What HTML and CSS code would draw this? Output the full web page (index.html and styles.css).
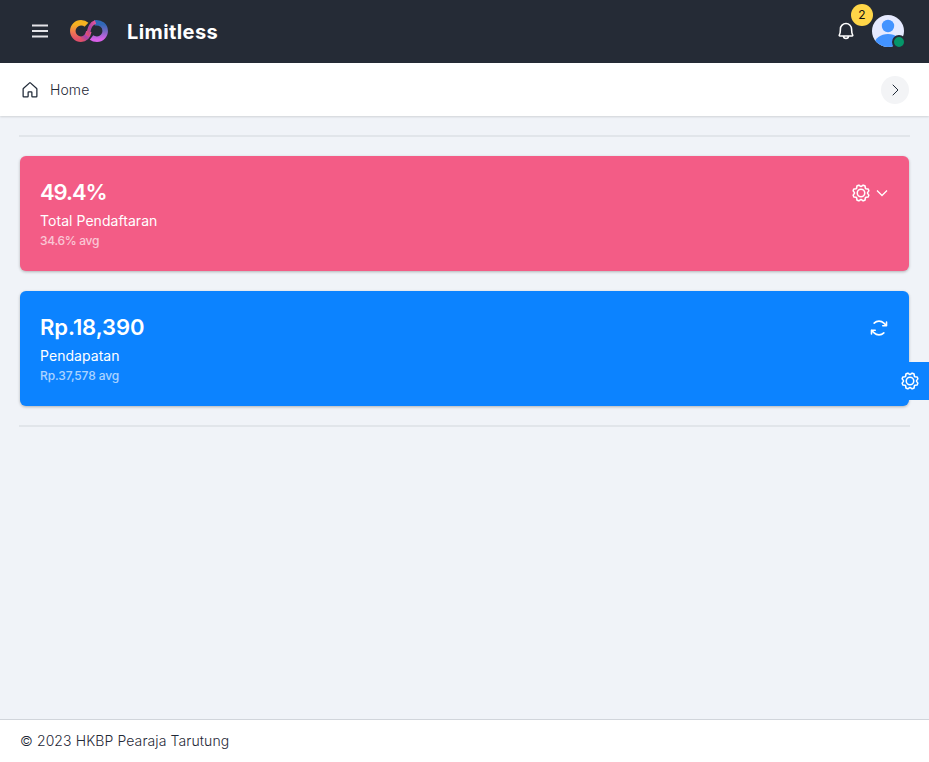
FILE: index.html
```html
<!DOCTYPE html>
<html lang="en">
<head>
<meta charset="utf-8">
<title>Limitless</title>
<link rel="stylesheet" href="styles.css">
</head>
<body>
<svg class="defs" aria-hidden="true">
  <symbol id="gear" viewBox="0 0 256 256">
    <circle cx="128" cy="128" r="48"/>
    <path d="M183.7,65.1q3.8,3.5,7.2,7.2l27.3,3.9a103.2,103.2,0,0,1,10.2,24.6l-16.6,22.1s.3,6.8,0,10.2l16.6,22.1a102.2,102.2,0,0,1-10.2,24.6l-27.3,3.9s-4.7,4.9-7.2,7.2l-3.9,27.3a103.2,103.2,0,0,1-24.6,10.2l-22.1-16.6a57.9,57.9,0,0,1-10.2,0l-22.1,16.6a102.2,102.2,0,0,1-24.6-10.2l-3.9-27.3q-3.7-3.5-7.2-7.2l-27.3-3.9a103.2,103.2,0,0,1-10.2-24.6l16.6-22.1s-.3-6.8,0-10.2L27.6,100.8A102.2,102.2,0,0,1,37.8,76.2l27.3-3.9q3.5-3.7,7.2-7.2l3.9-27.3a103.2,103.2,0,0,1,24.6-10.2l22.1,16.6a57.9,57.9,0,0,1,10.2,0l22.1-16.6a102.2,102.2,0,0,1,24.6,10.2Z"/>
  </symbol>
</svg>
<header class="navbar">
  <svg class="icon menu" viewBox="0 0 20 20"><path d="M2 4.500h16M2 10h16M2 15.500h16"/></svg>
  <a class="brand">
    <svg class="logo" viewBox="0 0 38 22">
      <defs>
        <linearGradient id="warm" x1="0" y1="0" x2="0" y2="1"><stop offset=".1" stop-color="#f5b220"/><stop offset=".55" stop-color="#f07a50"/><stop offset="1" stop-color="#e0506a"/></linearGradient>
        <linearGradient id="cool" x1="0" y1="0" x2="0" y2="1"><stop offset=".1" stop-color="#3068b8"/><stop offset=".5" stop-color="#7468c0"/><stop offset="1" stop-color="#d860e8"/></linearGradient>
        <linearGradient id="cross" x1="1" y1="0" x2="0" y2="1"><stop offset="0" stop-color="#e8549a"/><stop offset=".55" stop-color="#a844a8"/><stop offset="1" stop-color="#e0506a"/></linearGradient>
      </defs>
      <path stroke="url(#warm)" d="M16.500 4.800C15 3.400 13 2.800 11 2.800a8.200 8.200 0 0 0 0 16.400"/>
      <path stroke="url(#cool)" d="M24.500 2.900C31 2 35.200 6 35.200 11a8.200 8.200 0 0 1-8.200 8.200c-2 0-4-.5-5.500-1.700"/>
      <path stroke="url(#cross)" d="M10.800 19.200C15.500 19.200 18 16 18.800 11.500"/>
      <path class="strand" stroke="url(#cross)" d="M17.300 15.500C19.600 11 18.500 4.500 25.500 2"/>
    </svg>
    <span>Limitless</span>
  </a>
  <div class="bell">
    <svg class="icon" viewBox="0 0 256 256"><path d="M96 192a32 32 0 0 0 64 0M56.2 104a71.9 71.9 0 0 1 72.3-72c39.6.3 71.3 33.2 71.3 72.9v7.1c0 35.8 7.5 56.6 14.1 68a8 8 0 0 1-6.9 12H49a8 8 0 0 1-6.9-12c6.6-11.4 14.1-32.2 14.1-68Z"/></svg>
    <span class="badge">2</span>
  </div>
  <div class="avatar">
    <svg viewBox="0 0 32 32">
      <clipPath id="round"><circle cx="16" cy="16" r="16"/></clipPath>
      <g clip-path="url(#round)"><path fill="#e6eaff" d="M0 0h32v32H0z"/><circle cx="16" cy="11" r="6.2" fill="#4393ff"/><ellipse cx="16" cy="29" rx="13.5" ry="10" fill="#4393ff"/></g>
    </svg>
    <span class="status"></span>
  </div>
</header>
<nav class="breadcrumb">
  <svg class="icon" viewBox="0 0 256 256"><path d="M152 208v-48a8 8 0 0 0-8-8h-32a8 8 0 0 0-8 8v48a8 8 0 0 1-8 8H48a8 8 0 0 1-8-8v-92.500a8.300 8.300 0 0 1 2.600-5.900l80-72.700a8 8 0 0 1 10.800 0l80 72.700a8.300 8.300 0 0 1 2.600 5.900V208a8 8 0 0 1-8 8h-48a8 8 0 0 1-8-8Z"/></svg>
  <span class="crumb">Home</span>
  <button class="next" aria-label="Next"><svg class="icon" viewBox="0 0 20 20"><path d="M8 5l5 5-5 5"/></svg></button>
</nav>
<main>
  <hr>
  <section class="card pink">
    <div><h2 class="percent">49.4%</h2><p>Total Pendaftaran</p><small class="tight">34.6% avg</small></div>
    <div class="tools"><svg class="icon"><use href="#gear"/></svg><svg class="caret" viewBox="0 0 16 16"><path d="M4 5.500l5 5 5-5"/></svg></div>
  </section>
  <section class="card blue">
    <div><h2>Rp.18,390</h2><p>Pendapatan</p><small>Rp.37,578 avg</small></div>
    <div class="tools"><svg class="icon" viewBox="0 0 256 256"><path d="M176.200 99.700h48v-48M65.800 65.800a87.900 87.900 0 0 1 124.400 0l34 33.900M79.800 156.300h-48v48M190.200 190.200a87.900 87.900 0 0 1-124.400 0l-34-33.900"/></svg></div>
  </section>
  <hr>
</main>
<button class="settings" aria-label="Settings"><svg class="icon"><use href="#gear"/></svg></button>
<footer>© 2023 HKBP Pearaja Tarutung</footer>
</body>
</html>
```
FILE: styles.css
```css
* { box-sizing: border-box; }
body {
  margin: 0;
  height: 100vh;
  display: flex;
  flex-direction: column;
  overflow: hidden;
  background: #f0f3f8;
  color: #1f2937;
  font: 14px/20px Inter, sans-serif;
}
.defs { position: absolute; width: 0; height: 0; }
.icon {
  display: block;
  width: 20px;
  height: 20px;
  fill: none;
  stroke: currentColor;
  stroke-width: 16;
  stroke-linecap: round;
  stroke-linejoin: round;
}
button { border: 0; padding: 0; color: inherit; }
.navbar {
  height: 63px;
  flex: none;
  display: flex;
  align-items: center;
  padding: 0 25px 1px 30px;
  background: #252b36;
  color: #fff;
}
.menu { stroke: #e4e4e8; stroke-width: 1.800; stroke-linecap: butt; }
.brand {
  display: flex;
  align-items: center;
  gap: 19px;
  margin-left: 20px;
  font-size: 20px;
  font-weight: 700;
  letter-spacing: .4px;
}
.brand span { padding-top: 1px; }
.logo { width: 38px; height: 22px; fill: none; stroke-width: 5.500; }
.logo .strand { stroke-width: 3.600; }
.bell { position: relative; margin-left: auto; }
.bell .icon, .card .icon, .settings .icon { stroke-width: 20; }
.badge {
  position: absolute;
  left: 15px;
  top: -17px;
  width: 22px;
  height: 22px;
  border-radius: 50%;
  background: #ffd648;
  color: #111;
  font-size: 12px;
  line-height: 22px;
  text-align: center;
}
.avatar { position: relative; width: 32px; height: 32px; margin-left: 16px; }
.avatar svg { display: block; }
.status {
  position: absolute;
  right: -2px;
  bottom: -2px;
  width: 14px;
  height: 14px;
  border: 2px solid #252b36;
  border-radius: 50%;
  background: #059669;
}
.breadcrumb {
  flex: none;
  display: flex;
  align-items: center;
  gap: 10px;
  height: 53px;
  padding: 1px 20px 0;
  background: #fff;
  box-shadow: 0 1px 2px #0002;
}
.crumb { font-weight: 300; letter-spacing: .1px; }
.next {
  display: grid;
  place-items: center;
  width: 28px;
  height: 28px;
  margin-left: auto;
  border-radius: 50%;
  background: #f3f4f6;
}
.next .icon { stroke-width: 1; }
main { flex: 1; padding: 19px 20px; }
hr { height: 2px; margin: 0 -1px; border: 0; background: #e1e5ea; }
.card {
  display: flex;
  justify-content: space-between;
  height: 115px;
  margin: 19px 0 20px;
  padding: 20px;
  border-radius: 6px;
  color: #fff;
  box-shadow: 0 1px 3px #0004;
}
.card + .card { margin-bottom: 19px; }
.pink { background: #f35c86; }
.blue { background: #0c83ff; }
h2 { margin: 0; font-size: 22px; line-height: 32px; font-weight: 600; letter-spacing: -.08px; }
.percent { letter-spacing: -1.050px; }
p { margin: 3px 0 0; letter-spacing: .05px; }
small { display: block; font-size: 12px; font-weight: 500; letter-spacing: -.1px; opacity: .65; }
.tight { letter-spacing: -.3px; }
.tools { display: flex; height: 34px; align-items: center; }
.caret { width: 16px; height: 16px; margin-left: 2px; fill: none; stroke: #fff; stroke-width: 1.300; }
.settings {
  position: fixed;
  right: 0;
  top: 362px;
  width: 38px;
  height: 38px;
  padding: 9px;
  background: #0c83ff;
  color: #fff;
}
footer {
  flex: none;
  height: 43px;
  padding: 11px 20px;
  border-top: 1px solid #d1d5db;
  background: #fff;
  font-weight: 300;
  letter-spacing: .1px;
}
```
